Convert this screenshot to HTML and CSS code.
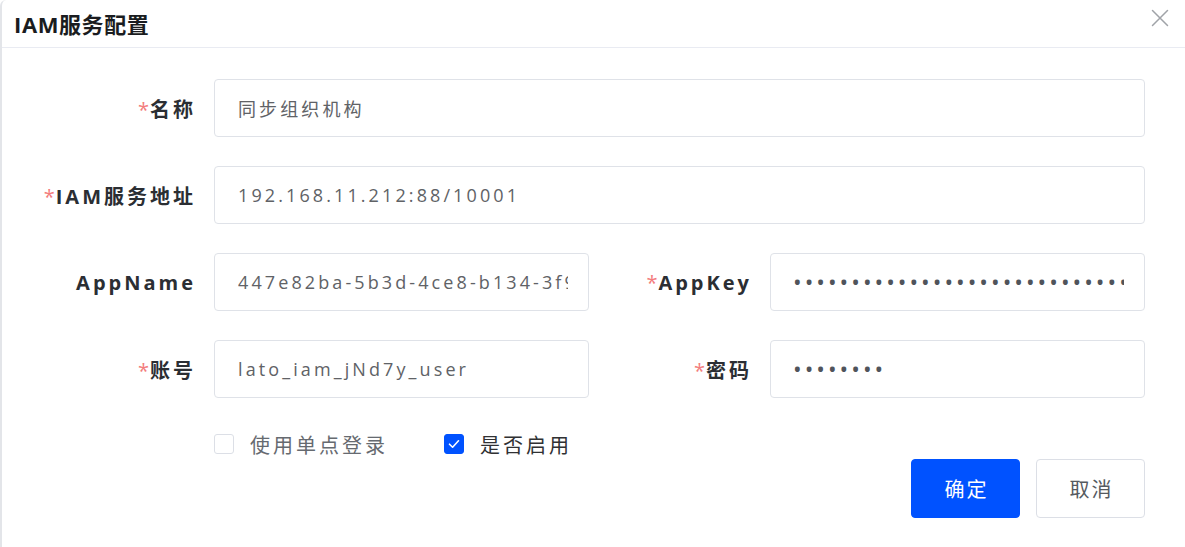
FILE: index.html
```html
<!DOCTYPE html>
<html lang="zh-CN">
<head>
<meta charset="utf-8">
<title>IAM服务配置</title>
<link rel="stylesheet" href="styles.css">
</head>
<body>
<div class="dialog">
  <div class="header">
    <span class="title">IAM服务配置</span>
    <button class="close" aria-label="关闭">
      <svg width="18" height="18" viewBox="0 0 18 18"><path d="M1.5 1.5L16.5 16.5M16.5 1.5L1.5 16.5" stroke="#a0a3a8" stroke-width="1.5" fill="none" stroke-linecap="round"/></svg>
    </button>
  </div>
  <div class="body">
    <div class="form">
      <label class="label"><span class="req">*</span>名称</label>
      <input class="input span3" type="text" value="同步组织机构">

      <label class="label"><span class="req">*</span>IAM服务地址</label>
      <input class="input span3" type="text" value="192.168.11.212:88/10001">

      <label class="label">AppName</label>
      <input class="input" type="text" value="447e82ba-5b3d-4ce8-b134-3f9a1c7d2e60">
      <label class="label"><span class="req">*</span>AppKey</label>
      <input class="input pwd" type="password" value="abcdefghijklmnopqrstuvwxyz0123456789abcd">

      <label class="label"><span class="req">*</span>账号</label>
      <input class="input" type="text" value="lato_iam_jNd7y_user">
      <label class="label"><span class="req">*</span>密码</label>
      <input class="input pwd" type="password" value="12345678">
    </div>
    <div class="checks">
      <label class="check">
        <span class="box"></span>
        <span class="check-text muted">使用单点登录</span>
      </label>
      <label class="check">
        <span class="box checked">
          <svg width="12" height="10" viewBox="0 0 12 10"><path d="M1.5 5.2L4.6 8.2L10.5 1.8" stroke="#fff" stroke-width="1.6" fill="none" stroke-linecap="round" stroke-linejoin="round"/></svg>
        </span>
        <span class="check-text">是否启用</span>
      </label>
    </div>
    <div class="actions">
      <button class="btn primary">确定</button>
      <button class="btn">取消</button>
    </div>
  </div>
</div>
</body>
</html>
```

FILE: styles.css
```css
* { box-sizing: border-box; }
html, body {
  margin: 0;
  padding: 0;
  background: #fff;
}
body {
  font-family: "Open Sans", "Noto Sans CJK SC", sans-serif;
  width: 1185px;
  height: 547px;
  overflow: hidden;
}
.dialog {
  width: 1185px;
  height: 547px;
  border-left: 2px solid #e3e5e9;
  border-top-left-radius: 6px;
  background: #fff;
}
.header {
  height: 48px;
  border-bottom: 1px solid #e9ebf2;
  display: flex;
  align-items: center;
  justify-content: space-between;
  padding: 0 16px 2px 12px;
}
.title {
  font-size: 22px;
  font-weight: 700;
  color: #1a1c20;
  letter-spacing: 0.6px;
}
.close {
  border: 0;
  background: none;
  padding: 0;
  width: 18px;
  height: 18px;
  margin-bottom: 10px;
  cursor: pointer;
}
.body {
  padding: 31px 40px 0 0;
}
.form {
  display: grid;
  grid-template-columns: 212px 1fr 181px 1fr;
  grid-auto-rows: 58px;
  row-gap: 29px;
  align-items: center;
}
.label {
  text-align: right;
  padding-right: 18px;
  font-family: "Open Sans", "Noto Sans CJK SC", sans-serif;
  font-size: 20px;
  font-weight: 700;
  color: #2b2e33;
  letter-spacing: 3px;
  white-space: nowrap;
}
.req {
  color: #f37c7c;
  font-weight: 400;
  letter-spacing: 0;
  margin-right: 1px;
}
.input {
  height: 58px;
  width: 100%;
  min-width: 0;
  border: 1px solid #dfe2e8;
  border-radius: 4px;
  padding: 0 20px 0 23px;
  font-family: "Open Sans", "Noto Sans CJK SC", sans-serif;
  font-size: 18px;
  letter-spacing: 3.1px;
  color: #606266;
  background: #fff;
  outline: none;
}
.input.pwd {
  font-size: 23px;
  letter-spacing: 3px;
  color: #50545b;
  padding-left: 22px;
}
.span3 { grid-column: 2 / -1; }
.checks {
  display: flex;
  gap: 56px;
  margin-left: 212px;
  margin-top: 34px;
  height: 24px;
  align-items: center;
}
.check {
  display: flex;
  align-items: center;
  gap: 16px;
}
.box {
  width: 20px;
  height: 20px;
  border: 1px solid #dcdfe6;
  border-radius: 3px;
  background: #fff;
  display: flex;
  align-items: center;
  justify-content: center;
}
.box.checked {
  background: #0052ff;
  border-color: #0052ff;
}
.check-text {
  font-size: 20px;
  color: #303133;
  letter-spacing: 3px;
}
.check-text.muted { color: #666a70; }
.actions {
  display: flex;
  justify-content: flex-end;
  gap: 16px;
  margin-top: 3px;
}
.btn {
  width: 109px;
  height: 59px;
  border: 1px solid #dcdfe6;
  border-radius: 4px;
  background: #fff;
  font-family: "Open Sans", "Noto Sans CJK SC", sans-serif;
  font-size: 20px;
  color: #555a60;
  letter-spacing: 2px;
  padding: 0 0 0 2px;
  cursor: pointer;
}
.btn.primary {
  background: #0052ff;
  border-color: #0052ff;
  color: #fff;
}
```
